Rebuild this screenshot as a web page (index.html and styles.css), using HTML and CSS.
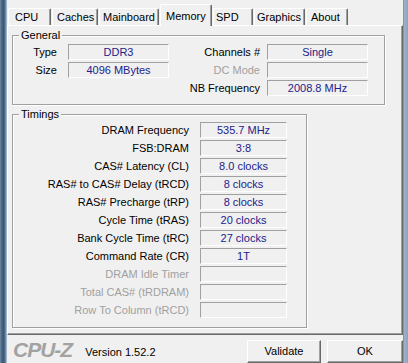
FILE: index.html
```html
<!DOCTYPE html>
<html>
<head>
<meta charset="utf-8">
<title>CPU-Z Memory</title>
<link rel="stylesheet" href="styles.css">
</head>
<body>
<div class="window">
  <div class="frame frame-left"></div>
  <div class="client">
    <div class="tabs">
      <div class="tab tab-cpu">CPU</div>
      <div class="tab tab-caches">Caches</div>
      <div class="tab tab-mainboard">Mainboard</div>
      <div class="tab tab-memory tab-selected">Memory</div>
      <div class="tab tab-spd">SPD</div>
      <div class="tab tab-graphics">Graphics</div>
      <div class="tab tab-about">About</div>
    </div>
    <div class="panel">
      <div class="group group-general">
        <div class="group-title">General</div>
        <div class="general-grid">
          <div class="label label-left">Type</div>
          <div class="value">DDR3</div>
          <div class="label label-right">Channels #</div>
          <div class="value">Single</div>

          <div class="label label-left">Size</div>
          <div class="value">4096 MBytes</div>
          <div class="label label-right disabled">DC Mode</div>
          <div class="value"></div>

          <div class="label label-left"></div>
          <div class="empty"></div>
          <div class="label label-right">NB Frequency</div>
          <div class="value">2008.8 MHz</div>
        </div>
      </div>
      <div class="group group-timings">
        <div class="group-title">Timings</div>
        <div class="timings-grid">
          <div class="label">DRAM Frequency</div><div class="value">535.7 MHz</div>
          <div class="label">FSB:DRAM</div><div class="value">3:8</div>
          <div class="label">CAS# Latency (CL)</div><div class="value">8.0 clocks</div>
          <div class="label">RAS# to CAS# Delay (tRCD)</div><div class="value">8 clocks</div>
          <div class="label">RAS# Precharge (tRP)</div><div class="value">8 clocks</div>
          <div class="label">Cycle Time (tRAS)</div><div class="value">20 clocks</div>
          <div class="label">Bank Cycle Time (tRC)</div><div class="value">27 clocks</div>
          <div class="label">Command Rate (CR)</div><div class="value">1T</div>
          <div class="label disabled">DRAM Idle Timer</div><div class="value"></div>
          <div class="label disabled">Total CAS# (tRDRAM)</div><div class="value"></div>
          <div class="label disabled">Row To Column (tRCD)</div><div class="value"></div>
        </div>
      </div>
    </div>
    <div class="footer">
      <div class="logo">CPU-Z</div>
      <div class="version">Version 1.52.2</div>
      <div class="buttons">
        <div class="button button-validate">Validate</div>
        <div class="button button-ok">OK</div>
      </div>
    </div>
  </div>
  <div class="frame frame-right"></div>
</div>
</body>
</html>
```
FILE: styles.css
```css
html, body {
  margin: 0;
  padding: 0;
}
body {
  width: 408px;
  height: 363px;
  overflow: hidden;
  background: #f0f0f0;
  font-family: "Liberation Sans", Arial, sans-serif;
  font-size: 11px;
  color: #000;
}
.window {
  display: flex;
  height: 363px;
}
.frame-left {
  width: 7px;
  flex: none;
  background: linear-gradient(to right, #6d8aa6 0, #46627f 2px, #3b5673 4px, #7f9bb6 6px, #b8c9da 7px);
}
.frame-right {
  width: 5px;
  flex: none;
  background: linear-gradient(to right, #5e7894 0, #9db3c9 1px, #8ba3bb 5px);
}
.client {
  width: 396px;
  flex: none;
  display: flex;
  flex-direction: column;
}

/* Tabs */
.tabs {
  display: flex;
  align-items: flex-end;
  height: 25px;
  padding-left: 1px;
  gap: 1px;
}
.tab {
  box-sizing: border-box;
  height: 17px;
  border-top: 1px solid #fff;
  border-left: 1px solid #fff;
  border-right: 1px solid #696969;
  border-radius: 2px 2px 0 0;
  box-shadow: inset -1px 0 0 #a0a0a0;
  background: #f0f0f0;
  line-height: 13px;
  padding-top: 2px;
  white-space: nowrap;
  flex: none;
}
.tab-cpu { width: 43px; padding-left: 6px; }
.tab-caches { width: 46px; padding-left: 4px; }
.tab-mainboard { width: 60px; padding-left: 3px; }
.tab-memory { width: 52px; padding-left: 5px; }
.tab-spd { width: 40px; padding-left: 2px; }
.tab-graphics { width: 51px; padding-left: 2px; }
.tab-about { width: 42px; padding-left: 4px; }
.tab-selected {
  height: 22px;
  padding-top: 5px;
  margin-bottom: -1px;
  position: relative;
  z-index: 1;
}

/* Panel */
.panel {
  box-sizing: border-box;
  height: 313px;
  border-top: 1px solid #fff;
  border-left: 1px solid #fff;
  border-right: 1px solid #696969;
  border-bottom: 1px solid #696969;
  box-shadow: inset -1px -1px 0 #a0a0a0;
  padding: 9px 0 0 4px;
  display: flex;
  flex-direction: column;
  gap: 9px;
}
.group {
  box-sizing: border-box;
  border: 1px solid #a0a0a0;
  box-shadow: 1px 1px 0 #fff, inset 1px 1px 0 #fff;
}
.group-general {
  width: 373px;
  padding-bottom: 8px;
}
.group-timings {
  width: 295px;
  padding-bottom: 9px;
}
.group-title {
  width: fit-content;
  margin: -7px 0 0 6px;
  padding: 0 2px;
  line-height: 13px;
  background: #f0f0f0;
}
.general-grid {
  margin-top: 2px;
  display: grid;
  grid-template-columns: 55px 101px 98px 101px;
  grid-auto-rows: 16px;
  row-gap: 2px;
}
.timings-grid {
  margin-top: 1px;
  display: grid;
  grid-template-columns: 176px 87px;
  grid-auto-rows: 16px;
  column-gap: 11px;
  row-gap: 2px;
}
.label {
  line-height: 16px;
  text-align: right;
  white-space: nowrap;
}
.label-left { padding-right: 11px; }
.label-right { padding-right: 7px; }
.disabled { color: #a0a0a0; }
.value {
  box-sizing: border-box;
  height: 16px;
  border: 1px solid;
  border-color: #a0a0a0 #fff #fff #a0a0a0;
  color: #22228a;
  text-align: center;
  line-height: 14px;
  white-space: nowrap;
}

/* Footer */
.footer {
  display: flex;
  align-items: flex-start;
  padding-top: 5px;
}
.logo {
  margin-left: 6px;
  font-size: 21px;
  font-weight: bold;
  font-style: italic;
  letter-spacing: -1px;
  line-height: 20px;
  color: #a2a2a2;
}
.version {
  margin: 6px 0 0 13px;
  line-height: 13px;
}
.buttons {
  margin-left: auto;
  display: flex;
  gap: 6px;
}
.button {
  box-sizing: border-box;
  height: 23px;
  border: 1px solid;
  border-color: #fff #696969 #696969 #fff;
  box-shadow: inset -1px -1px 0 #a0a0a0;
  background: #f0f0f0;
  text-align: center;
  line-height: 20px;
}
.button-validate { width: 74px; }
.button-ok { width: 76px; }
```
